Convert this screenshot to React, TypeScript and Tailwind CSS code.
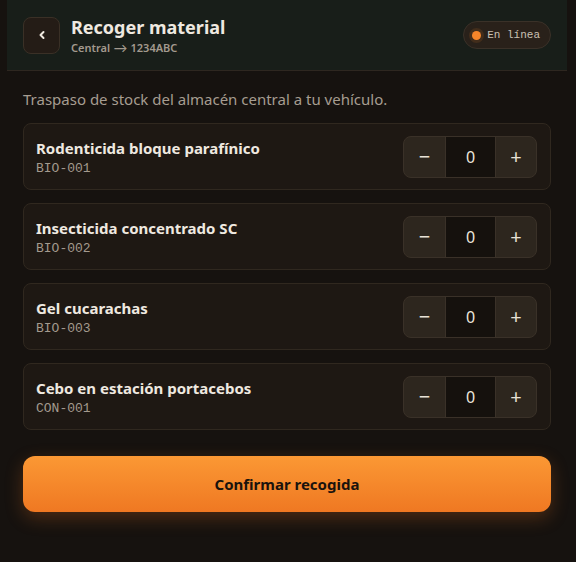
import React, { useState } from "react";

type Item = { name: string; code: string };

const items: Item[] = [
  { name: "Rodenticida bloque parafínico", code: "BIO-001" },
  { name: "Insecticida concentrado SC", code: "BIO-002" },
  { name: "Gel cucarachas", code: "BIO-003" },
  { name: "Cebo en estación portacebos", code: "CON-001" },
];

const sans = { fontFamily: '"Noto Sans", Inter, sans-serif' };
const mono = { fontFamily: '"Liberation Mono", "DejaVu Sans Mono", monospace' };

function Stepper({ value, onChange }: { value: number; onChange: (v: number) => void }) {
  return (
    <div className="flex h-[42px] overflow-hidden rounded-lg border border-[#3a3128] bg-[#2d261e]">
      <button
        className="flex w-[41px] items-center justify-center text-[20px] text-[#e8e1d6]"
        onClick={() => onChange(Math.max(0, value - 1))}
      >
        −
      </button>
      <div
        className="flex w-[51px] items-center justify-center border-x border-[#3a3128] bg-[#15110d] text-[16px] text-[#ece6dc]"
        style={sans}
      >
        {value}
      </div>
      <button
        className="flex w-[40px] items-center justify-center text-[20px] text-[#e8e1d6]"
        onClick={() => onChange(value + 1)}
      >
        +
      </button>
    </div>
  );
}

export default function App() {
  const [counts, setCounts] = useState<number[]>([0, 0, 0, 0]);

  return (
    <div className="min-h-[562px] bg-[#16120f]" style={sans}>
      <div className="ml-[7px] w-[560px]">
        {/* Header */}
        <div className="flex h-[71px] items-center border-b border-[#2e2720] bg-[#181e19] pl-4 pr-4">
          <button className="flex h-[37px] w-[37px] items-center justify-center rounded-lg border border-[#3a3026] bg-[#241c16] text-[#efe9e0]">
            <svg width="10" height="10" viewBox="0 0 10 10" fill="none">
              <path d="M6.5 2 L3.5 5 L6.5 8" stroke="currentColor" strokeWidth="2" strokeLinecap="round" strokeLinejoin="round" />
            </svg>
          </button>
          <div className="ml-[11px] flex flex-col">
            <div className="text-[18px] font-bold leading-[22px] text-[#efe9e0]">Recoger material</div>
            <div className="mt-[3px] text-[11px] font-semibold leading-[14px] text-[#a39a8e]">Central ⟶ 1234ABC</div>
          </div>
          <div className="ml-auto flex h-[28px] items-center gap-[6px] rounded-full border border-[#3a3128] bg-[#29211a] pl-[8px] pr-[10px]">
            <span className="h-[9px] w-[9px] rounded-full bg-[#f7852a] shadow-[0_0_0_3px_rgba(247,133,42,0.12)]" />
            <span className="text-[11px] text-[#c9c0b3]" style={mono}>
              En línea
            </span>
          </div>
        </div>

        {/* Body */}
        <div className="px-4 pt-[18px]">
          <p className="text-[15px] leading-[20px] text-[#a69d91]">
            Traspaso de stock del almacén central a tu vehículo.
          </p>

          <div className="mt-[14px] flex flex-col gap-[13px]">
            {items.map((it, i) => (
              <div
                key={it.code}
                className="flex h-[67px] items-center justify-between rounded-lg border border-[#30281f] bg-[#1e1813] pl-[12px] pr-[13px]"
              >
                <div className="flex flex-col pt-[2px]">
                  <div className="text-[15px] font-bold leading-[20px] text-[#efe9e0]">{it.name}</div>
                  <div className="mt-[2px] text-[13px] leading-[17px] text-[#a39a8e]" style={mono}>
                    {it.code}
                  </div>
                </div>
                <Stepper
                  value={counts[i]}
                  onChange={(v) => setCounts((c) => c.map((x, j) => (j === i ? v : x)))}
                />
              </div>
            ))}
          </div>

          <button className="mt-[26px] flex h-[56px] w-full items-center justify-center rounded-xl bg-gradient-to-b from-[#fb9834] to-[#ef7822] text-[15px] font-bold text-[#1a130d] shadow-[0_6px_18px_rgba(240,120,34,0.25)]">
            Confirmar recogida
          </button>
        </div>
      </div>
    </div>
  );
}
